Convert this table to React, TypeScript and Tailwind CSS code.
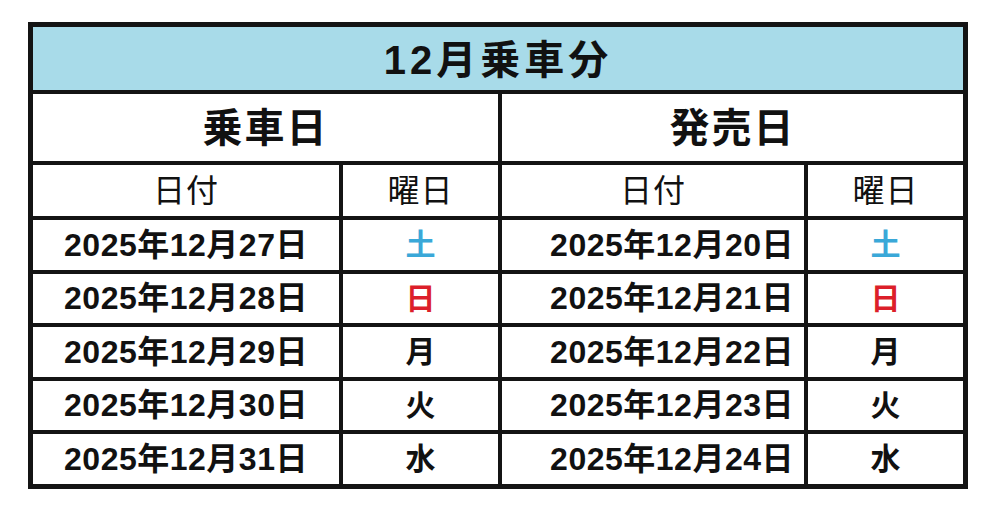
const rides = [
  { date: "2025年12月27日", day: "土" },
  { date: "2025年12月28日", day: "日" },
  { date: "2025年12月29日", day: "月" },
  { date: "2025年12月30日", day: "火" },
  { date: "2025年12月31日", day: "水" },
];

const sales = [
  { date: "2025年12月20日", day: "土" },
  { date: "2025年12月21日", day: "日" },
  { date: "2025年12月22日", day: "月" },
  { date: "2025年12月23日", day: "火" },
  { date: "2025年12月24日", day: "水" },
];

const dayColor = (d: string) =>
  d === "土" ? "text-[#3aa8d8]" : d === "日" ? "text-[#dc1f2a]" : "text-[#111]";

const cell = "bg-white flex items-center";

export default function App() {
  return (
    <div className="min-h-[513px] bg-white pt-[22px] pl-[28px] font-['Liberation_Sans','Noto_Sans_CJK_JP',sans-serif] text-[#111]">
      <div className="w-[940px] border-[5px] border-[#141414] bg-[#141414] grid grid-cols-[306px_155px_302px_155px] grid-rows-[63px_67px_51px_repeat(5,49.5px)] gap-[4px]">
        {/* title */}
        <div className="col-span-4 bg-[#a8dbe9] flex items-center justify-center pt-[2px] text-[40px] font-bold tracking-[4px]">
          12月乗車分
        </div>

        {/* section headers */}
        <div className={`${cell} col-span-2 justify-center text-[40px] font-bold tracking-[2px]`}>乗車日</div>
        <div className={`${cell} col-span-2 justify-center text-[40px] font-bold tracking-[2px]`}>発売日</div>

        {/* column headers */}
        <div className={`${cell} justify-center text-[32px] font-normal tracking-[1px]`}>日付</div>
        <div className={`${cell} justify-center text-[32px] font-normal tracking-[1px]`}>曜日</div>
        <div className={`${cell} justify-center text-[32px] font-normal tracking-[1px]`}>日付</div>
        <div className={`${cell} justify-center text-[32px] font-normal tracking-[1px]`}>曜日</div>

        {rides.map((r, i) => (
          <div key={r.date} className="contents">
            <div className={`${cell} justify-center text-[32px] font-bold tracking-[0.5px]`}>{r.date}</div>
            <div className={`${cell} justify-center text-[30px] font-bold ${dayColor(r.day)}`}>{r.day}</div>
            <div className={`${cell} justify-end pr-[10px] text-[32px] font-bold tracking-[0.5px]`}>{sales[i].date}</div>
            <div className={`${cell} justify-center text-[30px] font-bold ${dayColor(sales[i].day)}`}>{sales[i].day}</div>
          </div>
        ))}
      </div>
    </div>
  );
}
